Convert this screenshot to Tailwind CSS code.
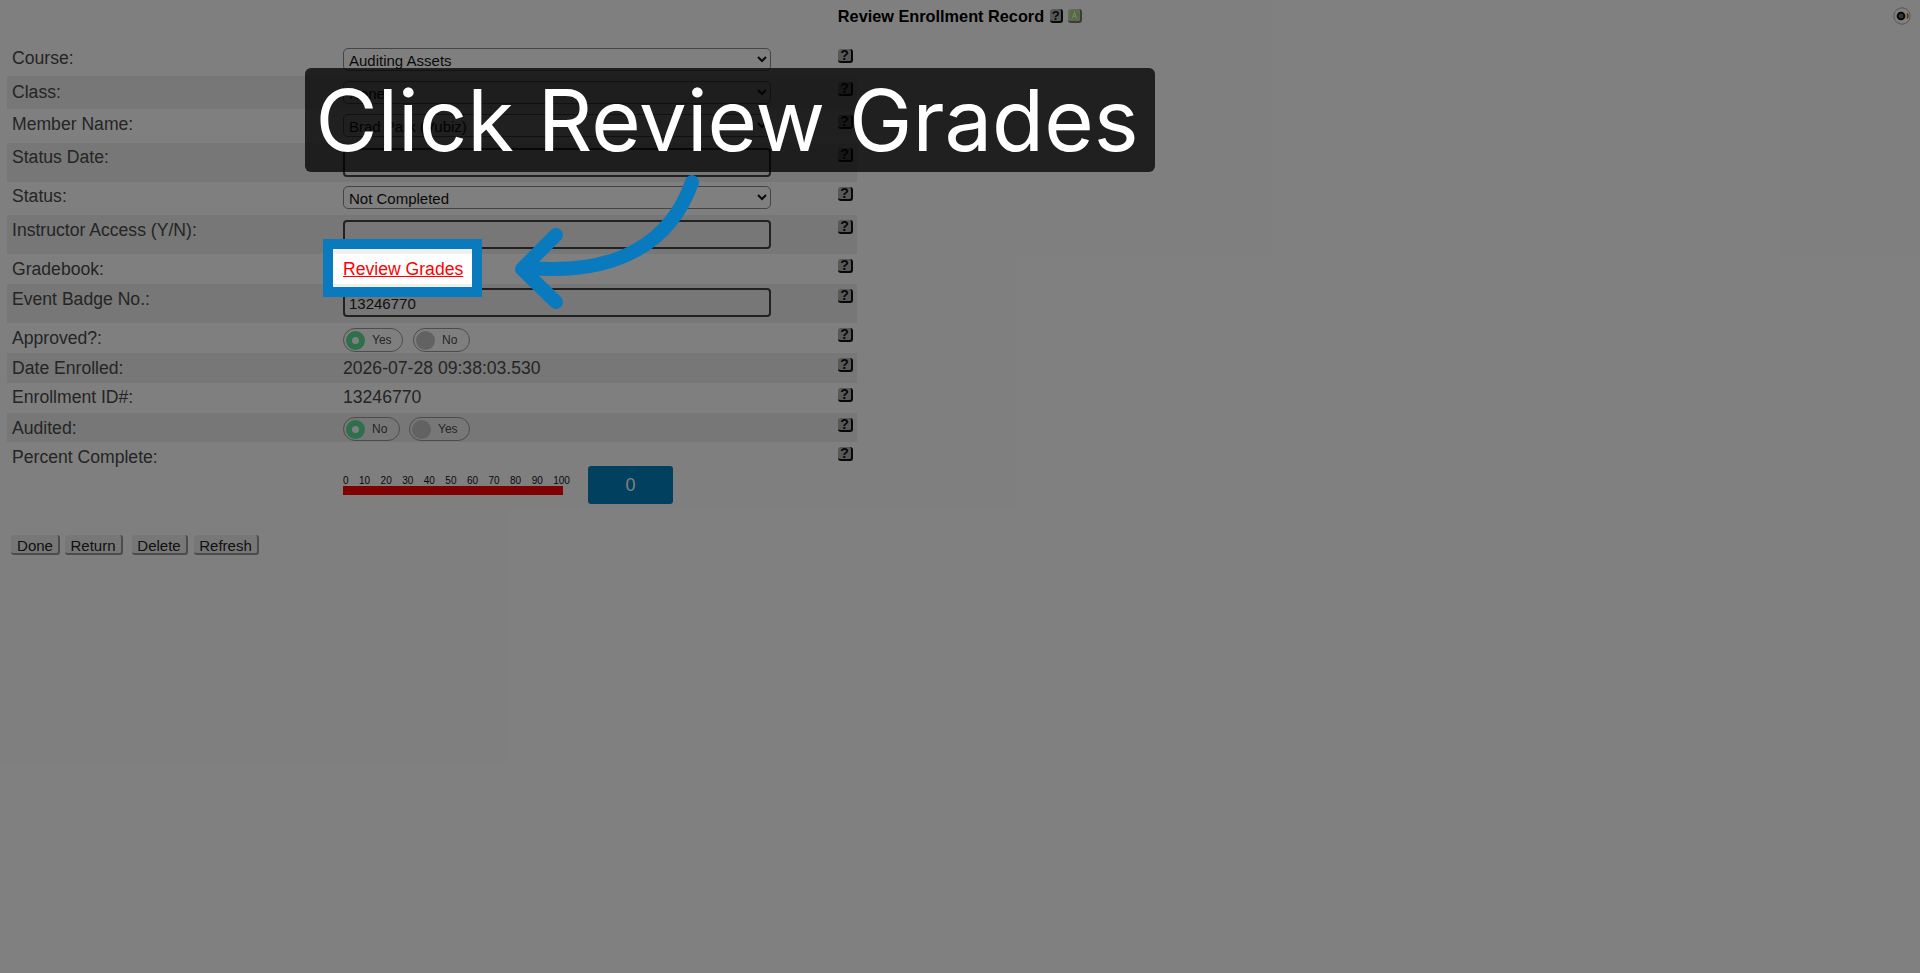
<!DOCTYPE html>
<html lang="en">
<head>
    <meta charset="UTF-8">
    <title>Review Enrollment Record</title>
    <script src="https://cdn.jsdelivr.net/npm/@tailwindcss/browser@4"></script>
</head>
<body class="relative h-screen overflow-hidden bg-white font-['Liberation_Sans',sans-serif] text-[17.6px] text-[#4a4a4a]">
    <!-- Header -->
    <div class="flex h-[44px] justify-center pt-[6px]">
        <span class="text-[16.3px] leading-[20px] font-bold text-black">Review Enrollment Record</span>
        <span class="ml-[6px] mt-[3px] flex h-[14px] w-[13px] items-center justify-center rounded-[3px] border-r-2 border-b-2 border-[#111] bg-[#b0b0b0] text-[13px] leading-none font-bold text-[#111]">?</span>
        <span class="ml-[5px] mt-[3px] flex h-[14px] w-[14px] items-center justify-center rounded-[3px] border-r-2 border-b-2 border-[#777] bg-[#ccc]">
            <svg class="h-[11px] w-[11px]" viewBox="0 0 12 12"><circle cx="6" cy="6" r="5.5" fill="#9ce060"/><path d="M3.5 9.5 6 2.5l2.5 7M4.5 7h3" fill="none" stroke="#e8f5e0" stroke-width="1.3"/></svg>
        </span>
    </div>
    <svg class="absolute top-[7px] right-[9px] h-[18px] w-[18px]" viewBox="0 0 18 18">
        <circle cx="9" cy="9" r="8.2" fill="none" stroke="#aaa" stroke-width="1"/>
        <circle cx="8" cy="9" r="3.4" fill="#666" stroke="#000" stroke-width="1.8"/>
        <path d="M14 6.5a4 4 0 0 1 0 5" fill="none" stroke="#c06000" stroke-width="1.4"/>
    </svg>

    <!-- Form rows -->
    <div class="ml-[7px] w-[850px]">
        <div class="flex h-[32px]">
            <div class="w-[336px] pt-[4px] pl-[5px] leading-[20px]">Course:</div>
            <select class="mt-[4px] h-[23px] w-[428px] rounded-[5px] border border-[#888] pt-[1px] pl-[1px] text-[15px] text-[#111]"><option>Auditing Assets</option></select>
            <span class="mt-[5px] ml-[67px] flex h-[14px] w-[15px] items-center justify-center rounded-[3px] border-r-2 border-b-2 border-[#111] bg-[#b0b0b0] text-[14px] leading-none font-bold text-[#111]">?</span>
        </div>
        <div class="flex h-[33px] bg-[#eee]">
            <div class="w-[336px] pt-[6px] pl-[5px] leading-[20px]">Class:</div>
            <select class="mt-[5px] h-[23px] w-[428px] rounded-[5px] border border-[#888] pt-[1px] pl-[1px] text-[15px] text-[#111]"><option>None</option></select>
            <span class="mt-[6px] ml-[67px] flex h-[14px] w-[15px] items-center justify-center rounded-[3px] border-r-2 border-b-2 border-[#111] bg-[#b0b0b0] text-[14px] leading-none font-bold text-[#111]">?</span>
        </div>
        <div class="flex h-[34px]">
            <div class="w-[336px] pt-[5px] pl-[5px] leading-[20px]">Member Name:</div>
            <select class="mt-[5px] h-[23px] w-[428px] rounded-[5px] border border-[#888] pt-[1px] pl-[1px] text-[15px] text-[#111]"><option>Brad Park (Vubiz)</option></select>
            <span class="mt-[6px] ml-[67px] flex h-[14px] w-[15px] items-center justify-center rounded-[3px] border-r-2 border-b-2 border-[#111] bg-[#b0b0b0] text-[14px] leading-none font-bold text-[#111]">?</span>
        </div>
        <div class="flex h-[39px] bg-[#eee]">
            <div class="w-[336px] pt-[4px] pl-[5px] leading-[20px]">Status Date:</div>
            <input type="text" class="mt-[5px] h-[29px] w-[428px] rounded-[4px] border-2 border-[#444] px-[4px] pt-[1px] text-[15px] text-[#222]">
            <span class="mt-[5px] ml-[67px] flex h-[14px] w-[15px] items-center justify-center rounded-[3px] border-r-2 border-b-2 border-[#111] bg-[#b0b0b0] text-[14px] leading-none font-bold text-[#111]">?</span>
        </div>
        <div class="flex h-[33px]">
            <div class="w-[336px] pt-[4px] pl-[5px] leading-[20px]">Status:</div>
            <select class="mt-[4px] h-[23px] w-[428px] rounded-[5px] border border-[#888] pt-[1px] pl-[1px] text-[15px] text-[#111]"><option>Not Completed</option></select>
            <span class="mt-[5px] ml-[67px] flex h-[14px] w-[15px] items-center justify-center rounded-[3px] border-r-2 border-b-2 border-[#111] bg-[#b0b0b0] text-[14px] leading-none font-bold text-[#111]">?</span>
        </div>
        <div class="flex h-[39px] bg-[#eee]">
            <div class="w-[336px] pt-[5px] pl-[5px] leading-[20px]">Instructor Access (Y/N):</div>
            <input type="text" class="mt-[5px] h-[29px] w-[428px] rounded-[4px] border-2 border-[#444] px-[4px] pt-[1px] text-[15px] text-[#222]">
            <span class="mt-[5px] ml-[67px] flex h-[14px] w-[15px] items-center justify-center rounded-[3px] border-r-2 border-b-2 border-[#111] bg-[#b0b0b0] text-[14px] leading-none font-bold text-[#111]">?</span>
        </div>
        <div class="flex h-[30px]">
            <div class="w-[336px] pt-[5px] pl-[5px] leading-[20px]">Gradebook:</div>
            <div class="w-[428px]"></div>
            <span class="mt-[5px] ml-[67px] flex h-[14px] w-[15px] items-center justify-center rounded-[3px] border-r-2 border-b-2 border-[#111] bg-[#b0b0b0] text-[14px] leading-none font-bold text-[#111]">?</span>
        </div>
        <div class="flex h-[39px] bg-[#eee]">
            <div class="w-[336px] pt-[5px] pl-[5px] leading-[20px]">Event Badge No.:</div>
            <input type="text" value="13246770" class="mt-[4px] h-[29px] w-[428px] rounded-[4px] border-2 border-[#444] px-[4px] pt-[1px] text-[15px] text-[#222]">
            <span class="mt-[5px] ml-[67px] flex h-[14px] w-[15px] items-center justify-center rounded-[3px] border-r-2 border-b-2 border-[#111] bg-[#b0b0b0] text-[14px] leading-none font-bold text-[#111]">?</span>
        </div>
        <div class="flex h-[30px]">
            <div class="w-[336px] pt-[5px] pl-[5px] leading-[20px]">Approved?:</div>
            <div class="mt-[5px] flex h-[24px] w-[428px] gap-[10px] text-[12px]">
                <span class="flex w-[60px] items-center rounded-full border border-[#999] pl-[2px]"><span class="h-[19px] w-[19px] rounded-full border-[6px] border-[#5ce098] bg-white"></span><span class="ml-[7px]">Yes</span></span>
                <span class="flex w-[57px] items-center rounded-full border border-[#999] pl-[2px]"><span class="h-[19px] w-[19px] rounded-full bg-[#c4c4c4]"></span><span class="ml-[7px]">No</span></span>
            </div>
            <span class="mt-[5px] ml-[67px] flex h-[14px] w-[15px] items-center justify-center rounded-[3px] border-r-2 border-b-2 border-[#111] bg-[#b0b0b0] text-[14px] leading-none font-bold text-[#111]">?</span>
        </div>
        <div class="flex h-[30px] bg-[#eee]">
            <div class="w-[336px] pt-[5px] pl-[5px] leading-[20px]">Date Enrolled:</div>
            <div class="w-[428px] pt-[5px] leading-[20px]">2026-07-28 09:38:03.530</div>
            <span class="mt-[5px] ml-[67px] flex h-[14px] w-[15px] items-center justify-center rounded-[3px] border-r-2 border-b-2 border-[#111] bg-[#b0b0b0] text-[14px] leading-none font-bold text-[#111]">?</span>
        </div>
        <div class="flex h-[30px]">
            <div class="w-[336px] pt-[4px] pl-[5px] leading-[20px]">Enrollment ID#:</div>
            <div class="w-[428px] pt-[4px] leading-[20px]">13246770</div>
            <span class="mt-[5px] ml-[67px] flex h-[14px] w-[15px] items-center justify-center rounded-[3px] border-r-2 border-b-2 border-[#111] bg-[#b0b0b0] text-[14px] leading-none font-bold text-[#111]">?</span>
        </div>
        <div class="flex h-[29px] bg-[#eee]">
            <div class="w-[336px] pt-[5px] pl-[5px] leading-[20px]">Audited:</div>
            <div class="mt-[4px] flex h-[24px] w-[428px] gap-[9px] text-[12px]">
                <span class="flex w-[57px] items-center rounded-full border border-[#999] pl-[2px]"><span class="h-[19px] w-[19px] rounded-full border-[6px] border-[#5ce098] bg-white"></span><span class="ml-[7px]">No</span></span>
                <span class="flex w-[61px] items-center rounded-full border border-[#999] pl-[2px]"><span class="h-[19px] w-[19px] rounded-full bg-[#c4c4c4]"></span><span class="ml-[7px]">Yes</span></span>
            </div>
            <span class="mt-[5px] ml-[67px] flex h-[14px] w-[15px] items-center justify-center rounded-[3px] border-r-2 border-b-2 border-[#111] bg-[#b0b0b0] text-[14px] leading-none font-bold text-[#111]">?</span>
        </div>
        <div class="flex h-[70px]">
            <div class="w-[336px] pt-[5px] pl-[5px] leading-[20px]">Percent Complete:</div>
            <div class="flex w-[428px] pt-[24px]">
                <div class="w-[245px] pt-[9px]">
                    <div class="flex w-[227px] justify-between text-[10px] leading-[11px] text-[#111]">
                        <span>0</span><span>10</span><span>20</span><span>30</span><span>40</span><span>50</span><span>60</span><span>70</span><span>80</span><span>90</span><span>100</span>
                    </div>
                    <div class="h-[9px] w-[220px] bg-[#ff0000]"></div>
                </div>
                <div class="flex h-[38px] w-[85px] items-center justify-center rounded-[3px] bg-[#0480c0] text-[18px] text-white">0</div>
            </div>
            <span class="mt-[5px] ml-[67px] flex h-[14px] w-[15px] items-center justify-center rounded-[3px] border-r-2 border-b-2 border-[#111] bg-[#b0b0b0] text-[14px] leading-none font-bold text-[#111]">?</span>
        </div>
    </div>

    <!-- Buttons -->
    <div class="mt-[23px] ml-[11px] flex text-[15px] text-[#222]">
        <button class="h-[20px] w-[49px] rounded-[3px] border-r-2 border-b-2 border-[#999] bg-[#efefef] pl-[1px]">Done</button>
        <button class="ml-[5px] h-[20px] w-[58px] rounded-[3px] border-r-2 border-b-2 border-[#999] bg-[#efefef]">Return</button>
        <button class="ml-[9px] h-[20px] w-[56px] rounded-[3px] border-r-2 border-b-2 border-[#999] bg-[#efefef]">Delete</button>
        <button class="ml-[6px] h-[20px] w-[65px] rounded-[3px] border-r-2 border-b-2 border-[#999] bg-[#efefef]">Refresh</button>
    </div>

    <!-- Guide overlay -->
    <div class="absolute inset-0 bg-black/50"></div>
    <div class="absolute top-[68px] left-[305px] flex h-[104px] w-[850px] items-center justify-center rounded-[6px] bg-black/75 pr-[6px] font-['Inter',sans-serif] text-[85px] leading-none text-white">Click Review Grades</div>
    <svg class="absolute inset-0 h-[973px] w-[1920px]" viewBox="0 0 1920 973" fill="none" stroke="#0a7abf" stroke-width="14" stroke-linecap="round" stroke-linejoin="round">
        <path d="M692 182C672 240 620 276 528 268"/>
        <path d="M556 235 522 269 556 302"/>
    </svg>
    <div class="absolute top-[239px] left-[323px] flex h-[58px] w-[159px] flex-col border-[10px] border-[#0a7abf] bg-white">
        <div class="h-[5px] bg-[#f0f0f0]"></div>
        <div class="flex flex-1 items-center pl-[10px]"><a href="#" class="leading-[20px] text-[#ff0000] underline">Review Grades</a></div>
        <div class="h-[3px] bg-[#f0f0f0]"></div>
    </div>
</body>
</html>
